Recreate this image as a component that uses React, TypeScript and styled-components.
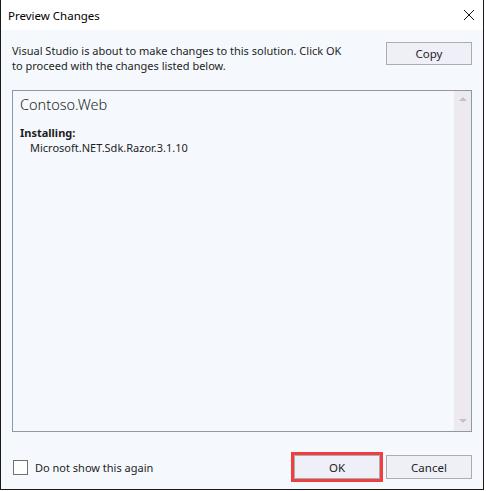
import React from "react";
import styled, { createGlobalStyle } from "styled-components";

const Global = createGlobalStyle`
  html, body { margin: 0; padding: 0; background: #ffffff; }
  * { box-sizing: border-box; }
`;

const FONT = `"Noto Sans", "Open Sans", sans-serif`;

const Window = styled.div`
  width: 484px;
  height: 490px;
  border-left: 1px solid #1a1a1a;
  border-right: 1px solid #1a1a1a;
  border-bottom: 1px solid #1a1a1a;
  display: flex;
  flex-direction: column;
  font-family: ${FONT};
  font-size: 11px;
  color: #1e1e1e;
`;

const TitleBar = styled.div`
  height: 30px;
  flex: none;
  background: #ffffff;
  display: flex;
  align-items: center;
  justify-content: space-between;
  padding: 0 7px 0 7px;
`;

const Title = styled.span`
  font-size: 11.5px;
  color: #000;
  padding-top: 1px;
`;

const CloseButton = styled.div`
  width: 12px;
  height: 12px;
  margin-right: 1px;
  display: flex;
`;

const Body = styled.div`
  flex: 1;
  background: #f5f9fd;
  display: flex;
  flex-direction: column;
  padding: 12px 11px 10px 11px;
`;

const TopRow = styled.div`
  height: 36px;
  flex: none;
  display: flex;
  justify-content: space-between;
  align-items: flex-start;
`;

const Message = styled.p`
  margin: 1px 0 0 0;
  line-height: 15px;
  width: 342px;
`;

const Button = styled.button<{ $focused?: boolean }>`
  width: 86px;
  height: 24px;
  flex: none;
  background: #efeff7;
  border: 1px solid #adadad;
  border-radius: 0;
  font-family: ${FONT};
  font-size: 11.5px;
  color: #1e1e1e;
  padding: 0;
  outline: ${(p) => (p.$focused ? "3px solid #ee4040" : "none")};
  outline-offset: 0;
`;

const CopyButton = styled(Button)`
  height: 23px;
`;

const ListBox = styled.div`
  margin-top: 12px;
  flex: 1;
  border: 1px solid #8c9aa8;
  background: #f5f9fd;
  display: flex;
`;

const ListContent = styled.div`
  flex: 1;
  padding: 3px 7px;
  display: flex;
  flex-direction: column;
`;

const ProjectName = styled.div`
  font-size: 14.5px;
  font-weight: 300;
  line-height: 20px;
  margin-bottom: 11px;
`;

const SectionLabel = styled.div`
  font-weight: 700;
  line-height: 15px;
`;

const PackageItem = styled.div`
  padding-left: 10px;
  line-height: 15px;
`;

const ScrollBar = styled.div`
  width: 17px;
  flex: none;
  background: #ede9ef;
  display: flex;
  flex-direction: column;
  justify-content: space-between;
  align-items: center;
  padding: 6px 0 8px 0;
`;

const Arrow = styled.div<{ $down?: boolean }>`
  width: 0;
  height: 0;
  border-left: 4px solid transparent;
  border-right: 4px solid transparent;
  ${(p) =>
    p.$down
      ? "border-top: 4px solid #c3c0c8;"
      : "border-bottom: 4px solid #c3c0c8;"}
`;

const Footer = styled.div`
  margin-top: 23px;
  height: 24px;
  flex: none;
  display: flex;
  align-items: center;
  justify-content: space-between;
`;

const CheckLabel = styled.label`
  display: flex;
  align-items: center;
  gap: 7px;
  margin-left: 1px;
`;

const CheckBox = styled.span`
  width: 15px;
  height: 15px;
  border: 1px solid #707070;
  background: #ffffff;
  display: inline-block;
`;

const ButtonGroup = styled.div`
  display: flex;
  gap: 6px;
`;

export default function App() {
  return (
    <>
      <Global />
      <Window>
        <TitleBar>
          <Title>Preview Changes</Title>
          <CloseButton>
            <svg width="12" height="12" viewBox="0 0 12 12">
              <path d="M1 1 L11 11 M11 1 L1 11" stroke="#111" strokeWidth="1" />
            </svg>
          </CloseButton>
        </TitleBar>
        <Body>
          <TopRow>
            <Message>
              Visual Studio is about to make changes to this solution. Click OK to proceed with the
              changes listed below.
            </Message>
            <CopyButton>Copy</CopyButton>
          </TopRow>
          <ListBox>
            <ListContent>
              <ProjectName>Contoso.Web</ProjectName>
              <SectionLabel>Installing:</SectionLabel>
              <PackageItem>Microsoft.NET.Sdk.Razor.3.1.10</PackageItem>
            </ListContent>
            <ScrollBar>
              <Arrow />
              <Arrow $down />
            </ScrollBar>
          </ListBox>
          <Footer>
            <CheckLabel>
              <CheckBox />
              Do not show this again
            </CheckLabel>
            <ButtonGroup>
              <Button $focused>OK</Button>
              <Button>Cancel</Button>
            </ButtonGroup>
          </Footer>
        </Body>
      </Window>
    </>
  );
}
